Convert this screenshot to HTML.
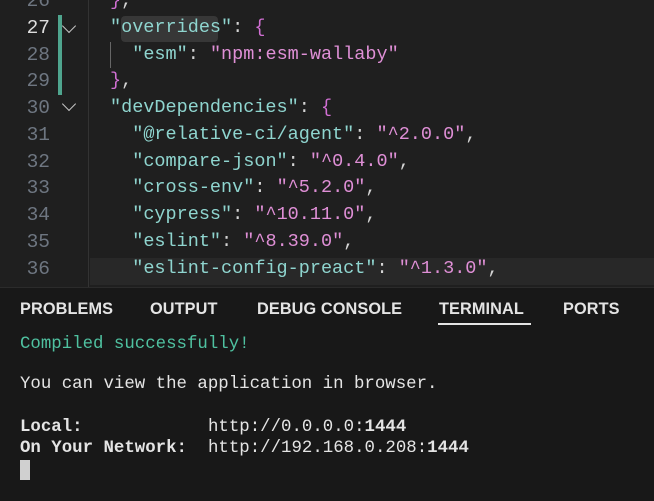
<!DOCTYPE html>
<html><head><style>
body{margin:0;width:654px;height:500px;background:#1f1f1f;overflow:hidden;position:relative;font-family:"Liberation Mono",monospace}
.ed{position:absolute;left:0;top:0;width:654px;height:287px;background:#1f1f1f}
.ln{position:absolute;left:0;width:50px;text-align:right;font-size:19.5px;color:#6e7681}
.code{position:absolute;left:110px;font-size:18.5px;white-space:pre;color:#d4d4d4}
.k{color:#8fd5cf}.s{color:#df8fd6}.b{color:#d16fd3}
.chev{position:absolute;left:64px;width:9px;height:9px;border-right:1.5px solid #c5c5c5;border-bottom:1.5px solid #c5c5c5;transform:rotate(45deg)}
.panel{position:absolute;left:0;top:287px;width:654px;height:213px;background:#181818;border-top:1px solid #2b2b2b}
.tab{position:absolute;top:300px;font:bold 16.3px "Liberation Sans",sans-serif;color:#e4e4e4;letter-spacing:0.1px}
.t{position:absolute;left:20px;font-size:17.4px;white-space:pre;color:#e4e4e4}
</style></head><body>
<div class="ed">
<div style="position:absolute;left:90px;top:258px;width:564px;height:27px;background:#282828"></div>
<div style="position:absolute;left:88px;top:0;width:1px;height:287px;background:#333"></div>
<div style="position:absolute;left:58px;top:15px;width:4px;height:80px;background:#4fa58e"></div>
<div style="position:absolute;left:121px;top:16px;width:97px;height:26px;background:#373737;border-radius:4px"></div>
<div style="position:absolute;left:110px;top:42px;width:1px;height:26px;background:#666"></div>
<div class="chev" style="top:21px"></div><div class="chev" style="top:99px"></div>
<div class="ln" style="top:-10px">26</div>
<div class="ln" style="top:17px;color:#ddd">27</div>
<div class="ln" style="top:44px">28</div>
<div class="ln" style="top:70px">29</div>
<div class="ln" style="top:97px">30</div>
<div class="ln" style="top:124px">31</div>
<div class="ln" style="top:151px">32</div>
<div class="ln" style="top:177px">33</div>
<div class="ln" style="top:204px">34</div>
<div class="ln" style="top:231px">35</div>
<div class="ln" style="top:258px">36</div>
<div class="code" style="top:-10px"><span class="b">}</span>,</div>
<div class="code" style="top:17px"><span class="k">"overrides"</span>: <span class="b">{</span></div>
<div class="code" style="top:44px">  <span class="k">"esm"</span>: <span class="s">"npm:esm-wallaby"</span></div>
<div class="code" style="top:70px"><span class="b">}</span>,</div>
<div class="code" style="top:97px"><span class="k">"devDependencies"</span>: <span class="b">{</span></div>
<div class="code" style="top:124px">  <span class="k">"@relative-ci/agent"</span>: <span class="s">"^2.0.0"</span>,</div>
<div class="code" style="top:151px">  <span class="k">"compare-json"</span>: <span class="s">"^0.4.0"</span>,</div>
<div class="code" style="top:177px">  <span class="k">"cross-env"</span>: <span class="s">"^5.2.0"</span>,</div>
<div class="code" style="top:204px">  <span class="k">"cypress"</span>: <span class="s">"^10.11.0"</span>,</div>
<div class="code" style="top:231px">  <span class="k">"eslint"</span>: <span class="s">"^8.39.0"</span>,</div>
<div class="code" style="top:258px">  <span class="k">"eslint-config-preact"</span>: <span class="s">"^1.3.0"</span>,</div>
</div>
<div class="panel"></div>
<div class="tab" style="left:20px">PROBLEMS</div>
<div class="tab" style="left:150px">OUTPUT</div>
<div class="tab" style="left:257px">DEBUG CONSOLE</div>
<div class="tab" style="left:439px">TERMINAL</div>
<div class="tab" style="left:563px">PORTS</div>
<div style="position:absolute;left:438px;top:323px;width:93px;height:2px;background:#e4e4e4"></div>
<div class="t" style="top:335px;color:#4fc1a0">Compiled successfully!</div>
<div class="t" style="top:375px">You can view the application in browser.</div>
<div class="t" style="top:418px"><b>Local:</b></div>
<div class="t" style="top:418px;left:208px">http://0.0.0.0:<b>1444</b></div>
<div class="t" style="top:439px"><b>On Your Network:</b></div>
<div class="t" style="top:439px;left:208px">http://192.168.0.208:<b>1444</b></div>
<div style="position:absolute;left:20px;top:460px;width:10px;height:20px;background:#d0d0d0"></div>
</body></html>
